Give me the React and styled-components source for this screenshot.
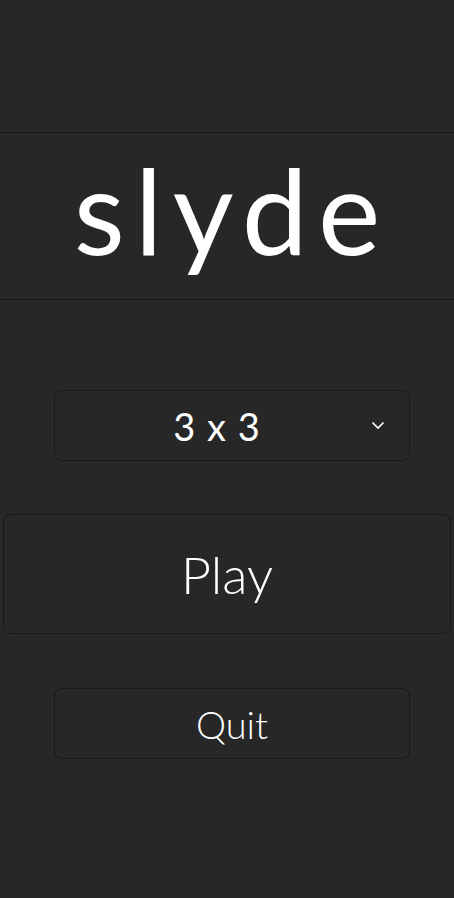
import React, { useState } from "react";
import styled, { createGlobalStyle } from "styled-components";

const GlobalStyle = createGlobalStyle`
  html, body {
    margin: 0;
    padding: 0;
    background: #272727;
  }
  body {
    font-family: "Lato", "Open Sans", sans-serif;
    color: #ffffff;
  }
`;

function App() {
  const [size, setSize] = useState("3 x 3");

  return (
    <Page>
      <GlobalStyle />
      <TitleBand>
        <Title>slyde</Title>
      </TitleBand>
      <SelectBox>
        <SelectText>{size}</SelectText>
        <Chevron width="14" height="10" viewBox="0 0 14 10">
          <path d="M1.5 2.5 L7 8 L12.5 2.5" fill="none" stroke="#fff" strokeWidth="1.6" />
        </Chevron>
      </SelectBox>
      <MenuButton big onClick={() => setSize(size)}>
        Play
      </MenuButton>
      <MenuButton>Quit</MenuButton>
    </Page>
  );
}

const Page = styled.div`
  display: flex;
  flex-direction: column;
  align-items: center;
  min-height: 898px;
  padding-top: 132px;
  box-sizing: border-box;
`;

const TitleBand = styled.div`
  align-self: stretch;
  height: 168px;
  box-sizing: border-box;
  border-top: 1px solid #161616;
  border-bottom: 1px solid #161616;
  display: flex;
  align-items: center;
  justify-content: center;
`;

const Title = styled.h1`
  margin: 0 0 12px 10px;
  font-family: "Lato", sans-serif;
  font-weight: 400;
  font-size: 118px;
  letter-spacing: 10px;
  line-height: 1;
  color: #ffffff;
`;

const SelectBox = styled.div`
  position: relative;
  margin: 90px 0 0 10px;
  width: 356px;
  height: 71px;
  box-sizing: border-box;
  border: 1px solid #181818;
  border-radius: 8px;
  display: flex;
  align-items: center;
  justify-content: center;
  padding-right: 30px;
`;

const SelectText = styled.span`
  font-size: 38px;
  letter-spacing: 1px;
`;

const Chevron = styled.svg`
  position: absolute;
  right: 24px;
  top: 29px;
`;

const MenuButton = styled.button`
  margin: ${(p) => (p.big ? "53px 0 0 0" : "54px 0 0 10px")};
  width: ${(p) => (p.big ? "448px" : "356px")};
  height: ${(p) => (p.big ? "120px" : "71px")};
  box-sizing: border-box;
  background: transparent;
  border: 1px solid #181818;
  border-radius: 8px;
  color: #ffffff;
  font-family: "Lato", sans-serif;
  font-weight: 300;
  font-size: ${(p) => (p.big ? "52px" : "38px")};
  cursor: pointer;
`;

export default App;
